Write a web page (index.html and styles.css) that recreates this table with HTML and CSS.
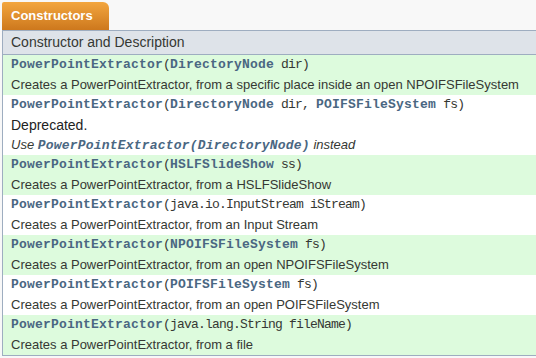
FILE: index.html
```html
<!DOCTYPE html>
<html lang="en">
    <head>
        <meta charset="UTF-8">
        <title>PowerPointExtractor - Constructors</title>
        <link rel="stylesheet" href="styles.css">
    </head>
<body>

<div class="summary">
    <div class="tab">Constructors</div>
    <table class="ctors">
        <thead>
            <tr><th>Constructor and Description</th></tr>
        </thead>
        <tbody>
            <tr class="alt">
                <td>
                    <code class="sig"><a class="name">PowerPointExtractor</a>(<a>DirectoryNode</a>&nbsp;dir)</code>
                    <div class="desc">Creates a PowerPointExtractor, from a specific place inside an open NPOIFSFileSystem</div>
                </td>
            </tr>
            <tr>
                <td>
                    <code class="sig"><a class="name">PowerPointExtractor</a>(<a>DirectoryNode</a>&nbsp;dir, <a>POIFSFileSystem</a>&nbsp;fs)</code>
                    <div class="desc dep">Deprecated.</div>
                    <div class="desc"><i>Use <code><a>PowerPointExtractor(DirectoryNode)</a></code> instead</i></div>
                </td>
            </tr>
            <tr class="alt">
                <td>
                    <code class="sig"><a class="name">PowerPointExtractor</a>(<a>HSLFSlideShow</a>&nbsp;ss)</code>
                    <div class="desc">Creates a PowerPointExtractor, from a HSLFSlideShow</div>
                </td>
            </tr>
            <tr>
                <td>
                    <code class="sig"><a class="name">PowerPointExtractor</a>(java.io.InputStream&nbsp;iStream)</code>
                    <div class="desc">Creates a PowerPointExtractor, from an Input Stream</div>
                </td>
            </tr>
            <tr class="alt">
                <td>
                    <code class="sig"><a class="name">PowerPointExtractor</a>(<a>NPOIFSFileSystem</a>&nbsp;fs)</code>
                    <div class="desc">Creates a PowerPointExtractor, from an open NPOIFSFileSystem</div>
                </td>
            </tr>
            <tr>
                <td>
                    <code class="sig"><a class="name">PowerPointExtractor</a>(<a>POIFSFileSystem</a>&nbsp;fs)</code>
                    <div class="desc">Creates a PowerPointExtractor, from an open POIFSFileSystem</div>
                </td>
            </tr>
            <tr class="alt">
                <td>
                    <code class="sig"><a class="name">PowerPointExtractor</a>(java.lang.String&nbsp;fileName)</code>
                    <div class="desc">Creates a PowerPointExtractor, from a file</div>
                </td>
            </tr>
        </tbody>
    </table>
</div>

</body>
</html>
```

FILE: styles.css
```css
body {
    margin: 0;
    background-color: #f8f8f8;
    font-family: "Liberation Sans", Arial, sans-serif;
    font-size: 14px;
    color: #353833;
}
.summary {
    padding: 2px 0 0 2px;
}
.tab {
    display: inline-block;
    width: 98px;
    height: 28px;
    line-height: 27px;
    padding-left: 9px;
    font-weight: bold;
    font-size: 13px;
    color: #fff;
    background: linear-gradient(#f3a63f, #cd781d);
    border-radius: 2px 6px 0 0;
    vertical-align: top;
}
table {
    width: 100%;
    border-collapse: collapse;
    border-left: 1px solid #9eadc0;
    border-bottom: 1px solid #9eadc0;
}
th {
    text-align: left;
    font-weight: normal;
    background-color: #dee3e9;
    border-top: 1px solid #9eadc0;
    border-bottom: 1px solid #9eadc0;
    padding: 0 8px;
    height: 23px;
    line-height: 23px;
}
td {
    background-color: #fff;
    padding: 0 0 0 8px;
    line-height: 20px;
    white-space: nowrap;
}
tr.alt td {
    background-color: #ddfbdd; /* pale green stripe */
}
code {
    font-family: "Liberation Mono", "DejaVu Sans Mono", monospace;
    font-size: 13px;
    letter-spacing: -0.8px;
}
.sig {
    display: block;
    height: 20px;
}
a {
    color: #4a6782;
    font-weight: bold;
    letter-spacing: 0.2px;
}
.desc {
    font-size: 13px;
    height: 20px;
}
.dep {
    font-size: 14px;
    color: #222;
}
```
